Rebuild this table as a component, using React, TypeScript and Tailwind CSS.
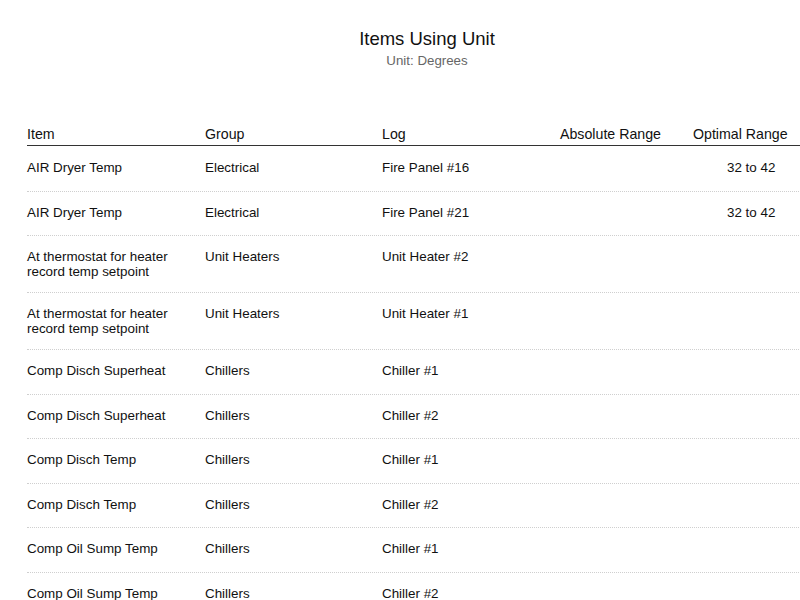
const rows = [
  { item: "AIR Dryer Temp", group: "Electrical", log: "Fire Panel #16", absolute: "", optimal: "32 to 42" },
  { item: "AIR Dryer Temp", group: "Electrical", log: "Fire Panel #21", absolute: "", optimal: "32 to 42" },
  { item: "At thermostat for heater record temp setpoint", group: "Unit Heaters", log: "Unit Heater #2", absolute: "", optimal: "" },
  { item: "At thermostat for heater record temp setpoint", group: "Unit Heaters", log: "Unit Heater #1", absolute: "", optimal: "" },
  { item: "Comp Disch Superheat", group: "Chillers", log: "Chiller #1", absolute: "", optimal: "" },
  { item: "Comp Disch Superheat", group: "Chillers", log: "Chiller #2", absolute: "", optimal: "" },
  { item: "Comp Disch Temp", group: "Chillers", log: "Chiller #1", absolute: "", optimal: "" },
  { item: "Comp Disch Temp", group: "Chillers", log: "Chiller #2", absolute: "", optimal: "" },
  { item: "Comp Oil Sump Temp", group: "Chillers", log: "Chiller #1", absolute: "", optimal: "" },
  { item: "Comp Oil Sump Temp", group: "Chillers", log: "Chiller #2", absolute: "", optimal: "" },
];

export default function App() {
  return (
    <div
      className="h-screen overflow-hidden bg-white text-[#111]"
      style={{ fontFamily: '"Liberation Sans", Arial, sans-serif' }}
    >
      {/* report is wider than the window, so it runs off the right edge */}
      <div className="w-[854px]">
        <header className="pt-[28px] text-center">
          <h1 className="text-[18.5px] leading-[22px]">Items Using Unit</h1>
          <p className="mt-[3px] text-[13.3px] leading-[16px] text-[#666]">Unit: Degrees</p>
        </header>

        <section className="mt-[56px] px-[27px]">
          <div className="flex border-b border-[#333] pb-[2px] text-[14.2px] leading-[18px]">
            <div className="w-[178px] shrink-0">Item</div>
            <div className="w-[177px] shrink-0">Group</div>
            <div className="w-[178px] shrink-0">Log</div>
            <div className="w-[133px] shrink-0">Absolute Range</div>
            <div className="flex-1">Optimal Range</div>
          </div>

          <div className="pt-[1px]">
            {rows.map((r, i) => (
              <div
                key={i}
                className="flex min-h-[44.5px] border-b border-dotted border-[#cfcfcf] py-[13px] text-[13.4px] leading-[15px]"
              >
                <div className="w-[178px] shrink-0 pr-[24px]">{r.item}</div>
                <div className="w-[177px] shrink-0">{r.group}</div>
                <div className="w-[178px] shrink-0">{r.log}</div>
                <div className="w-[133px] shrink-0">{r.absolute}</div>
                <div className="flex-1 pl-[34px]">{r.optimal}</div>
              </div>
            ))}
          </div>
        </section>
      </div>
    </div>
  );
}
